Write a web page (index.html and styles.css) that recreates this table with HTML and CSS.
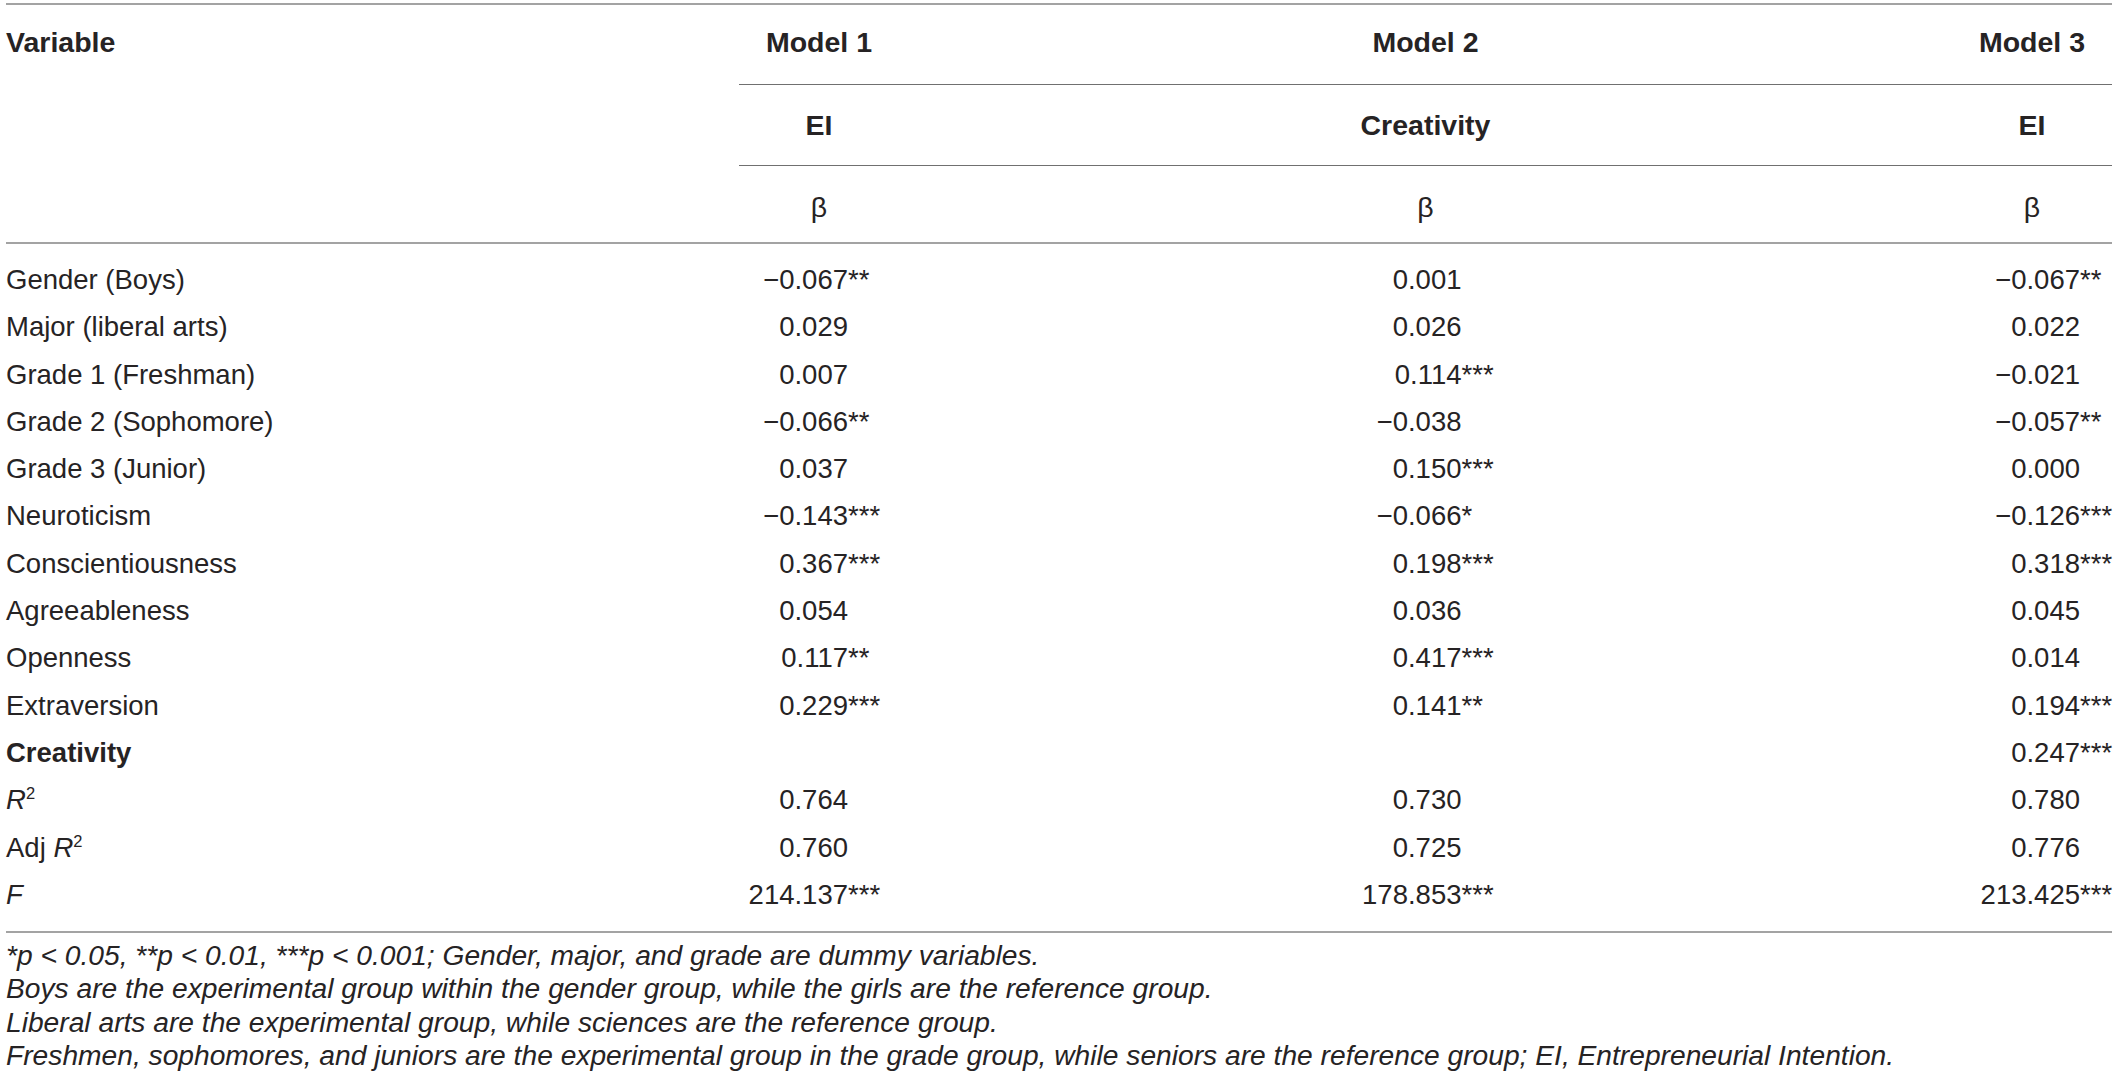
FILE: index.html
```html
<!DOCTYPE html>
<html lang="en">
<head>
  <meta charset="UTF-8">
  <title>Regression models</title>
  <link rel="stylesheet" href="styles.css">
</head>
<body>
  <div class="page">
    <table class="reg">
      <colgroup>
        <col class="c-var">
        <col>
        <col>
        <col>
      </colgroup>
      <thead>
        <tr class="h-model">
          <th class="lbl" rowspan="3">Variable</th>
          <th class="m1"><span class="box">Model 1</span></th>
          <th class="m2"><span class="box">Model 2</span></th>
          <th class="m3"><span class="box">Model 3</span></th>
        </tr>
        <tr class="h-dep">
          <th class="m1"><span class="box">EI</span></th>
          <th class="m2"><span class="box">Creativity</span></th>
          <th class="m3"><span class="box">EI</span></th>
        </tr>
        <tr class="h-beta">
          <th class="m1"><span class="box beta">β</span></th>
          <th class="m2"><span class="box beta">β</span></th>
          <th class="m3"><span class="box beta">β</span></th>
        </tr>
      </thead>
      <tbody>
        <tr>
          <td class="lbl">Gender (Boys)</td>
          <td class="m1"><span class="box"><span class="n">−0.067</span>**</span></td>
          <td class="m2"><span class="box"><span class="n">0.001</span></span></td>
          <td class="m3"><span class="box"><span class="n">−0.067</span>**</span></td>
        </tr>
        <tr>
          <td class="lbl">Major (liberal arts)</td>
          <td class="m1"><span class="box"><span class="n">0.029</span></span></td>
          <td class="m2"><span class="box"><span class="n">0.026</span></span></td>
          <td class="m3"><span class="box"><span class="n">0.022</span></span></td>
        </tr>
        <tr>
          <td class="lbl">Grade 1 (Freshman)</td>
          <td class="m1"><span class="box"><span class="n">0.007</span></span></td>
          <td class="m2"><span class="box"><span class="n">0.114</span>***</span></td>
          <td class="m3"><span class="box"><span class="n">−0.021</span></span></td>
        </tr>
        <tr>
          <td class="lbl">Grade 2 (Sophomore)</td>
          <td class="m1"><span class="box"><span class="n">−0.066</span>**</span></td>
          <td class="m2"><span class="box"><span class="n">−0.038</span></span></td>
          <td class="m3"><span class="box"><span class="n">−0.057</span>**</span></td>
        </tr>
        <tr>
          <td class="lbl">Grade 3 (Junior)</td>
          <td class="m1"><span class="box"><span class="n">0.037</span></span></td>
          <td class="m2"><span class="box"><span class="n">0.150</span>***</span></td>
          <td class="m3"><span class="box"><span class="n">0.000</span></span></td>
        </tr>
        <tr>
          <td class="lbl">Neuroticism</td>
          <td class="m1"><span class="box"><span class="n">−0.143</span>***</span></td>
          <td class="m2"><span class="box"><span class="n">−0.066</span>*</span></td>
          <td class="m3"><span class="box"><span class="n">−0.126</span>***</span></td>
        </tr>
        <tr>
          <td class="lbl">Conscientiousness</td>
          <td class="m1"><span class="box"><span class="n">0.367</span>***</span></td>
          <td class="m2"><span class="box"><span class="n">0.198</span>***</span></td>
          <td class="m3"><span class="box"><span class="n">0.318</span>***</span></td>
        </tr>
        <tr>
          <td class="lbl">Agreeableness</td>
          <td class="m1"><span class="box"><span class="n">0.054</span></span></td>
          <td class="m2"><span class="box"><span class="n">0.036</span></span></td>
          <td class="m3"><span class="box"><span class="n">0.045</span></span></td>
        </tr>
        <tr>
          <td class="lbl">Openness</td>
          <td class="m1"><span class="box"><span class="n">0.117</span>**</span></td>
          <td class="m2"><span class="box"><span class="n">0.417</span>***</span></td>
          <td class="m3"><span class="box"><span class="n">0.014</span></span></td>
        </tr>
        <tr>
          <td class="lbl">Extraversion</td>
          <td class="m1"><span class="box"><span class="n">0.229</span>***</span></td>
          <td class="m2"><span class="box"><span class="n">0.141</span>**</span></td>
          <td class="m3"><span class="box"><span class="n">0.194</span>***</span></td>
        </tr>
        <tr>
          <td class="lbl"><strong>Creativity</strong></td>
          <td class="m1"></td>
          <td class="m2"></td>
          <td class="m3"><span class="box"><span class="n">0.247</span>***</span></td>
        </tr>
        <tr>
          <td class="lbl"><i>R</i><sup>2</sup></td>
          <td class="m1"><span class="box"><span class="n">0.764</span></span></td>
          <td class="m2"><span class="box"><span class="n">0.730</span></span></td>
          <td class="m3"><span class="box"><span class="n">0.780</span></span></td>
        </tr>
        <tr>
          <td class="lbl">Adj <i>R</i><sup>2</sup></td>
          <td class="m1"><span class="box"><span class="n">0.760</span></span></td>
          <td class="m2"><span class="box"><span class="n">0.725</span></span></td>
          <td class="m3"><span class="box"><span class="n">0.776</span></span></td>
        </tr>
        <tr>
          <td class="lbl"><i>F</i></td>
          <td class="m1"><span class="box"><span class="n">214.137</span>***</span></td>
          <td class="m2"><span class="box"><span class="n">178.853</span>***</span></td>
          <td class="m3"><span class="box"><span class="n">213.425</span>***</span></td>
        </tr>
      </tbody>
    </table>

    <div class="notes">
      <p>*p &lt; 0.05, **p &lt; 0.01, ***p &lt; 0.001; Gender, major, and grade are dummy variables.</p>
      <p>Boys are the experimental group within the gender group, while the girls are the reference group.</p>
      <p>Liberal arts are the experimental group, while sciences are the reference group.</p>
      <p>Freshmen, sophomores, and juniors are the experimental group in the grade group, while seniors are the reference group; EI, Entrepreneurial Intention.</p>
    </div>
  </div>
</body>
</html>
```

FILE: styles.css
```css
body {
  margin: 0;
  background: #fff;
  color: #262324;
  font-family: "Liberation Sans", Arial, sans-serif;
}
.page {
  padding: 3px 6px 0 6px;
}
.reg {
  width: 100%;
  border-collapse: collapse;
  table-layout: fixed;
  border-top: 2px solid #a3a3a3;
  border-bottom: 2px solid #a3a3a3;
}
.c-var {
  width: 733px;
}
.reg th {
  padding: 0;
  font-size: 28.5px;
  font-weight: bold;
  vertical-align: middle;
}
.reg th.lbl {
  text-align: left;
  vertical-align: top;
  padding-top: 21px;
  border-bottom: 2px solid #a3a3a3;
}
.h-model th {
  height: 75px;
  padding-bottom: 4px;
}
.h-model th.lbl {
  padding-bottom: 0;
}
.h-model th.m1, .h-model th.m2, .h-model th.m3,
.h-dep th {
  border-bottom: 1px solid #707070;
}
.h-dep th {
  height: 80px;
}
.h-beta th {
  height: 70px;
  padding-top: 6px;
  border-bottom: 2px solid #a3a3a3;
}
.beta {
  font-weight: normal;
}
.m1 {
  text-align: left;
}
.m2 {
  text-align: center;
}
.m3 {
  text-align: right;
}
.box {
  display: inline-block;
  width: 160px;
  text-align: center;
}
.reg td {
  padding: 0;
  font-size: 27.5px;
  line-height: 47.3px;
  white-space: nowrap;
}
.reg td .box {
  text-align: left;
}
.n {
  display: inline-block;
  text-align: right;
}
.m1 .n {
  width: 109px;
}
.m2 .n {
  width: 116px;
}
.m3 .n {
  width: 128px;
}
.reg tbody tr:first-child td {
  padding-top: 12px;
}
.reg tbody tr:last-child td {
  padding-bottom: 13px;
}
.reg sup {
  font-size: 0.6em;
  line-height: 0;
  vertical-align: 0.6em;
}
.notes {
  margin-top: 6px;
  font-style: italic;
  font-size: 28.2px;
  line-height: 33.3px;
}
.notes p {
  margin: 0;
}
```
